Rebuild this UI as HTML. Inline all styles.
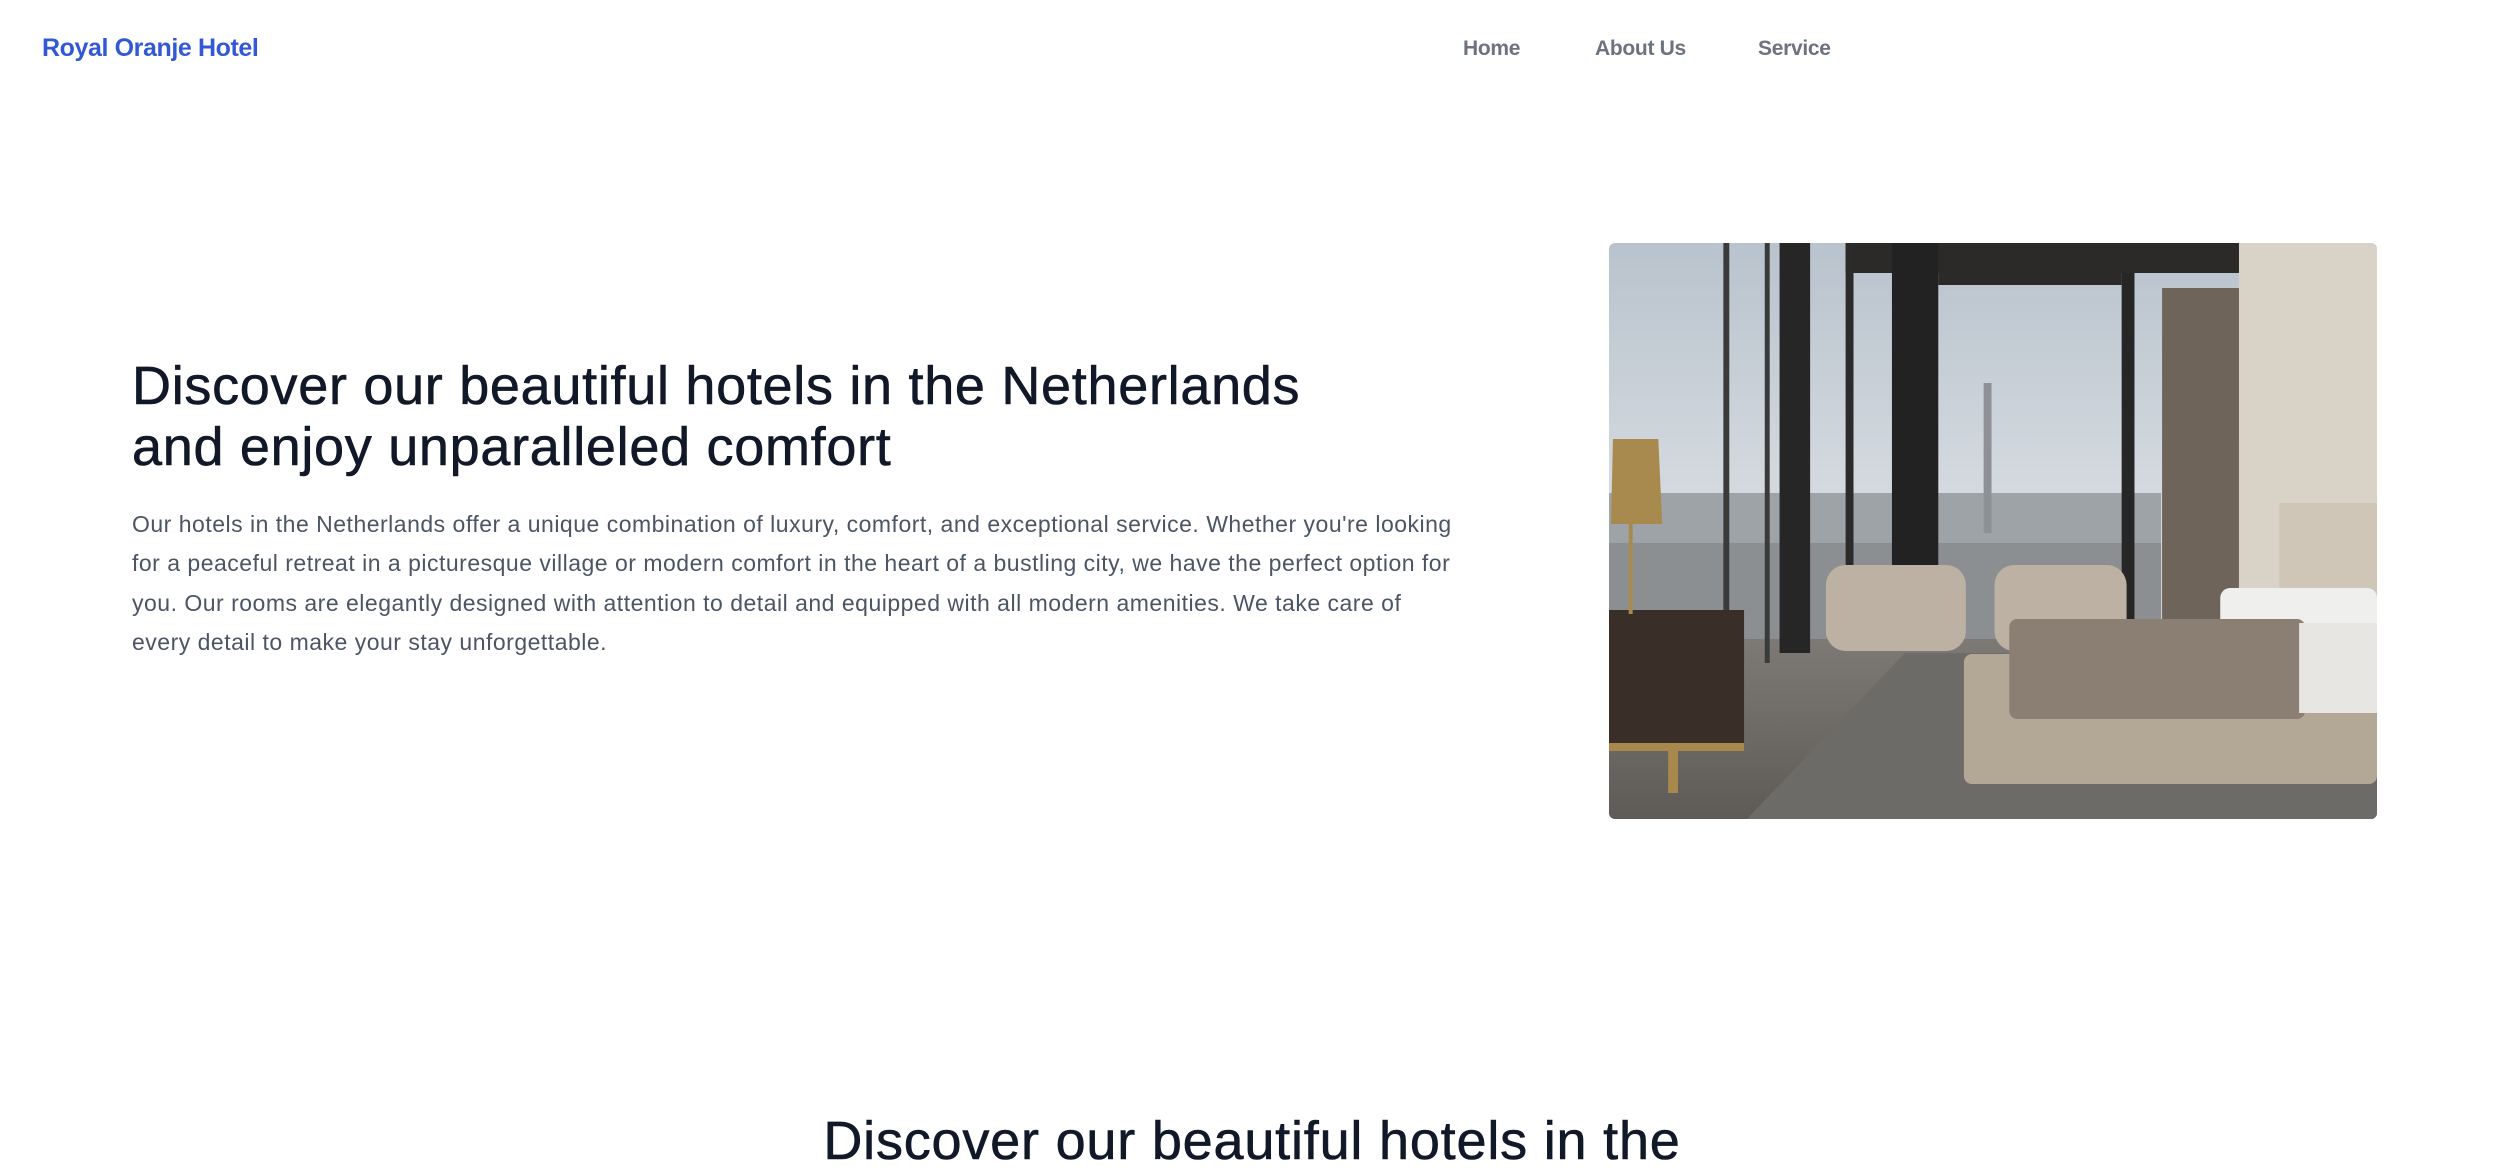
<!DOCTYPE html>
<html><head><meta charset="utf-8"><style>
*{margin:0;padding:0;box-sizing:border-box}
body{width:2504px;height:1165px;overflow:hidden;background:#fff;font-family:"Liberation Sans",sans-serif;position:relative}
.logo{position:absolute;left:42px;top:34px;font-size:25px;font-weight:bold;color:#3358d4;letter-spacing:-0.4px}
.nav a{position:absolute;top:37px;font-size:21px;font-weight:bold;color:#6b7280;text-decoration:none;letter-spacing:-0.3px}
h1{position:absolute;left:132px;top:356px;width:1350px;font-size:54px;font-weight:normal;line-height:61px;color:#111827;letter-spacing:0.7px;-webkit-text-stroke:0.6px #111827}
p{position:absolute;left:132px;top:505px;width:1400px;font-size:23px;line-height:39.3px;color:#4b5563;letter-spacing:0.5px}
h2{position:absolute;left:0;width:2504px;top:1110px;text-align:center;font-size:54px;font-weight:normal;color:#111827;letter-spacing:0.8px;-webkit-text-stroke:0.6px #111827}
.img{position:absolute;left:1609px;top:243px;width:768px;height:576px;border-radius:6px;overflow:hidden}
</style></head><body>
<div class="logo">Royal Oranje Hotel</div>
<div class="nav"><a style="left:1463px">Home</a><a style="left:1595px">About Us</a><a style="left:1758px">Service</a></div>
<h1>Discover our beautiful hotels in the Netherlands<br>and enjoy unparalleled comfort</h1>
<p>Our hotels in the Netherlands offer a unique combination of luxury, comfort, and exceptional service. Whether you're looking<br>for a peaceful retreat in a picturesque village or modern comfort in the heart of a bustling city, we have the perfect option for<br>you. Our rooms are elegantly designed with attention to detail and equipped with all modern amenities. We take care of<br>every detail to make your stay unforgettable.</p>
<div class="img"><svg width="768" height="576" viewBox="0 0 779 576" preserveAspectRatio="none">
<defs><linearGradient id="sky" x1="0" y1="0" x2="0" y2="1"><stop offset="0" stop-color="#b9c3cd"/><stop offset="0.5" stop-color="#d8dde2"/><stop offset="1" stop-color="#c9ccce"/></linearGradient>
<linearGradient id="fl" x1="0" y1="0" x2="0" y2="1"><stop offset="0" stop-color="#7d7a76"/><stop offset="1" stop-color="#5e5b57"/></linearGradient></defs>
<rect width="779" height="576" fill="url(#sky)"/>
<rect x="0" y="250" width="560" height="160" fill="#9ea3a7"/>
<rect x="0" y="300" width="560" height="110" fill="#8c8f92"/>
<rect x="380" y="140" width="8" height="150" fill="#8d9196"/>
<rect x="0" y="396" width="779" height="180" fill="url(#fl)"/>
<polygon points="140,576 300,410 779,410 779,576" fill="#6d6b68"/>
<rect x="240" y="0" width="425" height="30" fill="#2b2a28"/>
<rect x="116" y="0" width="6" height="420" fill="#3a3a3a"/>
<rect x="158" y="0" width="5" height="420" fill="#3a3a3a"/>
<rect x="173" y="0" width="31" height="410" fill="#262626"/>
<rect x="240" y="0" width="8" height="400" fill="#2b2b2b"/>
<rect x="287" y="0" width="47" height="400" fill="#222"/>
<rect x="520" y="30" width="13" height="360" fill="#262626"/>
<rect x="334" y="30" width="186" height="12" fill="#2b2a28"/>
<rect x="561" y="45" width="78" height="335" fill="#6e645a"/>
<rect x="639" y="0" width="140" height="440" fill="#d9d2c6"/>
<rect x="680" y="260" width="99" height="120" fill="#cfc6b8"/>
<rect x="0" y="367" width="137" height="138" fill="#3a2e28"/>
<rect x="0" y="500" width="137" height="8" fill="#a8884c"/>
<rect x="60" y="505" width="10" height="45" fill="#a8884c"/>
<polygon points="4,196 50,196 54,281 2,281" fill="#a88a4e"/>
<rect x="20" y="281" width="4" height="90" fill="#a88a4e"/>
<rect x="220" y="322" width="142" height="86" rx="20" fill="#bcb1a2"/>
<rect x="391" y="322" width="134" height="86" rx="20" fill="#bcb1a2"/>
<rect x="360" y="411" width="419" height="130" rx="8" fill="#b3a796"/>
<rect x="620" y="345" width="159" height="80" rx="10" fill="#efefee"/>
<rect x="406" y="376" width="300" height="100" rx="8" fill="#8a7f72"/>
<rect x="700" y="380" width="79" height="90" fill="#e7e6e3"/>
</svg></div>
<h2>Discover our beautiful hotels in the</h2>
</body></html>
